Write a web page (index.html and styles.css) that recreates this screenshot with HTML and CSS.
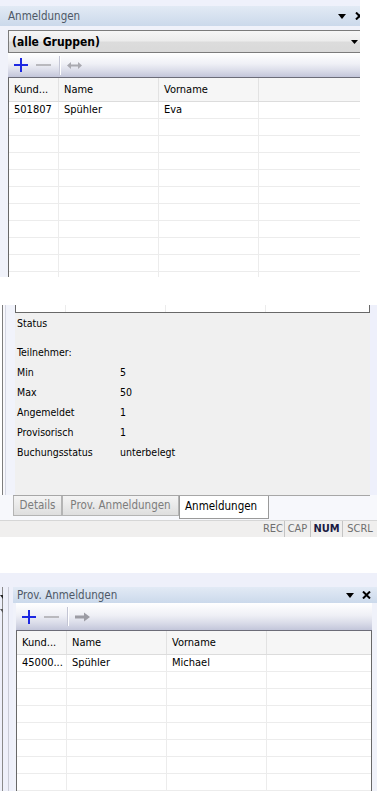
FILE: index.html
```html
<!DOCTYPE html>
<html lang="de">
<head>
  <meta charset="UTF-8"/>
  <meta name="viewport" content="width=device-width,initial-scale=1.0"/>
  <title>Anmeldungen</title>
  <link rel="stylesheet" href="styles.css">
</head>
<body>
  <!-- first capture: Anmeldungen pane -->
  <section class="shot shot-one">
    <div class="pane pane-wide">
      <div class="dock-strip"></div>
      <div class="pane-title title-one">
        <span class="pane-name">Anmeldungen</span>
        <span class="pane-buttons">
          <svg width="8" height="5" viewBox="0 0 8 5"><path d="M0 0h8L4 5z"/></svg>
          <svg width="9" height="8" viewBox="0 0 9 8"><path d="M1 0.5l7 7M8 0.5l-7 7" stroke="#000" stroke-width="2"/></svg>
        </span>
      </div>
      <div class="pane-body body-one">
        <div class="combo">
          <span>(alle Gruppen)</span>
          <svg width="7" height="4" viewBox="0 0 7 4"><path d="M0 0h7L3.5 4z"/></svg>
        </div>
        <div class="toolbar">
          <svg class="tool" width="14" height="14" viewBox="0 0 14 14"><rect x="6" y="0" width="2" height="14" fill="#1d28e2"/><rect x="0" y="6" width="14" height="2" fill="#1d28e2"/></svg>
          <svg class="tool" width="15" height="14" viewBox="0 0 15 14"><rect x="0" y="6" width="15" height="2" fill="#b9b9be"/></svg>
          <span class="tool-sep"></span>
          <svg class="tool" width="15" height="9" viewBox="0 0 15 9"><path d="M0 4.5L4 1v2.5h7V1l4 3.5L11 8V5.5H4V8z" fill="#a9a9b0"/></svg>
        </div>
        <div class="grid">
          <div class="grid-row grid-head"><div>Kund...</div><div>Name</div><div>Vorname</div><div></div></div>
          <div class="grid-row"><div>501807</div><div>Spühler</div><div>Eva</div><div></div></div>
          <div class="grid-row"><div></div><div></div><div></div><div></div></div>
          <div class="grid-row"><div></div><div></div><div></div><div></div></div>
          <div class="grid-row"><div></div><div></div><div></div><div></div></div>
          <div class="grid-row"><div></div><div></div><div></div><div></div></div>
          <div class="grid-row"><div></div><div></div><div></div><div></div></div>
          <div class="grid-row"><div></div><div></div><div></div><div></div></div>
          <div class="grid-row"><div></div><div></div><div></div><div></div></div>
          <div class="grid-row"><div></div><div></div><div></div><div></div></div>
          <div class="grid-row"><div></div><div></div><div></div><div></div></div>
          <div class="grid-row"><div></div><div></div><div></div><div></div></div>
        </div>
      </div>
    </div>
  </section>

  <!-- second capture: status panel with tabs -->
  <section class="shot shot-two">
    <div class="two-main">
      <div class="gutter gutter-two"></div>
      <div class="two-col">
        <div class="grid grid-tail">
          <div class="grid-row"><div></div><div></div><div></div><div></div></div>
        </div>
        <div class="status-panel">
          <div class="status-title">Status</div>
          <div class="status-sub">Teilnehmer:</div>
          <div class="status-line"><span>Min</span><span>5</span></div>
          <div class="status-line"><span>Max</span><span>50</span></div>
          <div class="status-line"><span>Angemeldet</span><span>1</span></div>
          <div class="status-line"><span>Provisorisch</span><span>1</span></div>
          <div class="status-line"><span>Buchungsstatus</span><span>unterbelegt</span></div>
        </div>
      </div>
      <div class="gutter-right"></div>
    </div>
    <div class="tab-row">
      <div class="tabs">
        <span class="tab tab-details">Details</span>
        <span class="tab tab-prov">Prov. Anmeldungen</span>
        <span class="tab tab-active">Anmeldungen</span>
      </div>
    </div>
    <div class="statusbar">
      <span class="ind ind-rec">REC</span>
      <span class="ind ind-cap">CAP</span>
      <span class="ind ind-num">NUM</span>
      <span class="ind ind-scrl">SCRL</span>
    </div>
  </section>

  <!-- third capture: Prov. Anmeldungen pane -->
  <section class="shot shot-three">
    <div class="dock-strip strip-three"></div>
    <div class="three-main">
      <div class="gutter gutter-three">
        <span class="clip-arrow"></span>
        <span class="clip-arrow small"></span>
      </div>
      <div class="pane">
        <div class="pane-title title-three">
          <span class="pane-name">Prov. Anmeldungen</span>
          <span class="pane-buttons">
            <svg width="8" height="5" viewBox="0 0 8 5"><path d="M0 0h8L4 5z"/></svg>
            <svg width="9" height="8" viewBox="0 0 9 8"><path d="M1 0.5l7 7M8 0.5l-7 7" stroke="#000" stroke-width="2"/></svg>
          </span>
        </div>
        <div class="pane-body body-three">
          <div class="toolbar toolbar-tall">
            <svg class="tool" width="14" height="14" viewBox="0 0 14 14"><rect x="6" y="0" width="2" height="14" fill="#1d28e2"/><rect x="0" y="6" width="14" height="2" fill="#1d28e2"/></svg>
            <svg class="tool" width="15" height="14" viewBox="0 0 15 14"><rect x="0" y="6" width="15" height="2" fill="#b9b9be"/></svg>
            <span class="tool-sep"></span>
            <svg class="tool" width="15" height="10" viewBox="0 0 15 10"><path d="M0 3.5h9V0.5L15 5l-6 4.5V6.5H0z" fill="#9c9ca4"/></svg>
          </div>
          <div class="grid grid-boxed">
            <div class="grid-row grid-head"><div>Kund...</div><div>Name</div><div>Vorname</div><div></div></div>
            <div class="grid-row"><div>45000...</div><div>Spühler</div><div>Michael</div><div></div></div>
            <div class="grid-row"><div></div><div></div><div></div><div></div></div>
            <div class="grid-row"><div></div><div></div><div></div><div></div></div>
            <div class="grid-row"><div></div><div></div><div></div><div></div></div>
            <div class="grid-row"><div></div><div></div><div></div><div></div></div>
            <div class="grid-row"><div></div><div></div><div></div><div></div></div>
            <div class="grid-row"><div></div><div></div><div></div><div></div></div>
            <div class="grid-row"><div></div><div></div><div></div><div></div></div>
          </div>
        </div>
      </div>
    </div>
  </section>
</body>
</html>
```

FILE: styles.css
```css
* { box-sizing: border-box; }

body {
  margin: 0;
  background: #fff;
  font-family: "DejaVu Sans Condensed", "DejaVu Sans", sans-serif;
  font-size: 11px;
  color: #000;
}

.shot { overflow: hidden; }
.shot-one { width: 360px; height: 277px; margin-bottom: 28px; }
.shot-two { width: 377px; height: 232px; margin-bottom: 36px; }
.shot-three { width: 377px; height: 218px; }

.pane { flex: 1; display: flex; flex-direction: column; }
.pane-wide { width: 370px; }

.dock-strip { height: 6px; background: #eff1fb; }
.strip-three { height: 14px; background: #eef0fa; }

/* pane caption */
.pane-title {
  height: 20px;
  display: flex;
  align-items: center;
  justify-content: space-between;
  padding: 0 6px 0 8px;
  background: linear-gradient(#e2eaf5, #cbd9eb);
  color: #4e5866;
  font-size: 11.5px;
}
.title-three { padding-left: 4px; }
.pane-buttons { display: flex; align-items: center; gap: 8px; }
.title-one .pane-buttons { gap: 9px; }
.pane-buttons svg { display: block; }

.pane-body { background: #f0f2fa; }
.body-one { padding: 4px 0 0 8px; }
.body-three { padding: 0 5px 0 3px; flex: 1; }

/* group combo */
.combo {
  height: 23px;
  width: 358px;
  display: flex;
  align-items: center;
  justify-content: space-between;
  padding: 0 8px 0 3px;
  border: 1px solid #7b7b7b;
  border-right: 0;
  background: linear-gradient(#f6f6f6, #ececec 48%, #dcdcdc 52%, #d9d9d9);
  font-size: 12px;
  font-weight: bold;
}
.combo svg { display: block; }

/* toolbar */
.toolbar {
  height: 25px;
  display: flex;
  align-items: center;
  padding-left: 6px;
  background: linear-gradient(#ffffff, #eff0f6 45%, #d9dbe8 75%, #c3c6da);
  border-bottom: 1px solid #6c6c78;
}
.toolbar-tall { height: 28px; }
.tool { display: block; margin-right: 8px; }
.tool-sep {
  width: 2px;
  height: 19px;
  margin-right: 6px;
  border-left: 1px solid #c3c5d4;
  border-right: 1px solid #fff;
}

/* data grid */
.grid { background: #fff; border-left: 1px solid #686868; }
.grid-boxed { border-right: 1px solid #686868; }
.grid-row {
  display: grid;
  grid-template-columns: 50px 100px 100px 1fr;
  height: 17px;
  border-bottom: 1px solid #ececec;
}
.grid-row > div {
  border-right: 1px solid #ececec;
  padding-left: 5px;
  line-height: 16px;
  white-space: nowrap;
  overflow: hidden;
}
.grid-row > div:last-child { border-right: 0; }
.grid-head { height: 24px; background: #f6f6f6; border-bottom-color: #dcdcdc; }
.grid-head > div { line-height: 23px; border-right-color: #e2e2e2; }

.grid-tail { border-right: 1px solid #686868; }
.grid-tail .grid-row { height: 8px; border-bottom: 1px solid #686868; }

/* second capture */
.two-main { display: flex; height: 190px; }
.gutter { width: 15px; background: #f1f3fb; border-left: 1px solid #7d7d7d; margin-left: 2px; flex: none; }
.gutter-two { width: 13px; box-shadow: inset 2px 0 0 #f8f8fc, inset 3px 0 0 #d4d6e2; }
.two-col { width: 355px; display: flex; flex-direction: column; }
.gutter-right { flex: 1; background: #eef0fb; }

.status-panel {
  flex: 1;
  background: #f0f0f0;
  padding: 0 0 0 2px;
  font-size: 10.5px;
}
.status-title { height: 20px; line-height: 20px; }
.status-sub { height: 20px; line-height: 20px; margin-top: 9px; }
.status-line { display: flex; height: 20px; line-height: 20px; }
.status-line span:first-child { width: 103px; }

.tab-row { height: 25px; padding-left: 13px; background: #f7f8fc; }
.tabs {
  height: 25px;
  width: 357px;
  display: flex;
  align-items: flex-start;
  border-top: 1px solid #a7a7a7;
  font-size: 11.5px;
}
.tab {
  height: 20px;
  line-height: 18px;
  border: 1px solid #b4b4b4;
  border-top: 0;
  background: linear-gradient(#f4f4f4, #dedede);
  color: #7c7c7c;
  text-align: center;
}
.tab-details { width: 49px; }
.tab-prov { width: 117px; }
.tab-active {
  width: 90px;
  height: 23px;
  line-height: 21px;
  background: #fff;
  color: #000;
  border-color: #9a9a9a;
  text-align: left;
  padding-left: 5px;
}

.statusbar {
  height: 17px;
  display: flex;
  justify-content: flex-end;
  align-items: center;
  border-top: 1px solid #d6d6d6;
  background: #f0efee;
  color: #6e6e6e;
}
.ind { height: 16px; line-height: 16px; text-align: center; }
.ind-rec { width: 22px; }
.ind-cap { width: 26px; border-left: 1px solid #c4c4c4; }
.ind-num { width: 32px; border-left: 1px solid #c4c4c4; font-weight: bold; color: #1c1c44; }
.ind-scrl { width: 35px; border-left: 1px solid #c4c4c4; }

/* third capture */
.three-main { display: flex; height: 204px; background: #eef0fa; }
.gutter-three {
  position: relative;
  width: 13px;
  margin-left: 0;
  border-left: 0;
  background: #eef0fa;
  box-shadow: inset 2px 0 0 #eef0fa, inset 3px 0 0 #8a8a8a, inset 8px 0 0 #eef0fa, inset 9px 0 0 #c9cbd6;
}
.clip-arrow {
  position: absolute;
  left: 0;
  top: 8px;
  width: 0;
  height: 0;
  border-top: 4px solid #222;
  border-left: 3px solid transparent;
  border-right: 0;
}
.clip-arrow.small { top: 22px; border-top-color: #555; }
```
